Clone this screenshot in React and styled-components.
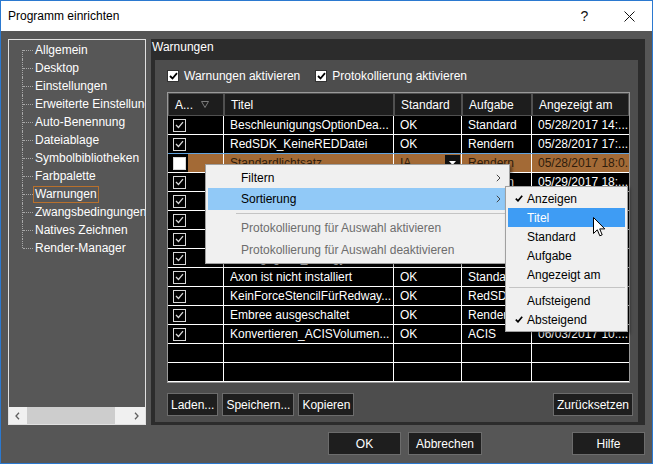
import React from "react";
import styled, { createGlobalStyle } from "styled-components";

const GlobalStyle = createGlobalStyle`
  html, body {
    margin: 0;
    padding: 0;
    background: #ffffff;
  }
  body {
    font-family: "Liberation Sans", Arial, sans-serif;
    font-size: 12px;
  }
`;

const Window = styled.div`
  position: relative;
  width: 653px;
  height: 464px;
  box-sizing: border-box;
  border: 1px solid #2b79d0;
  display: flex;
  flex-direction: column;
  background: #565656;
  overflow: hidden;
`;

const TitleBar = styled.div`
  height: 30px;
  flex-shrink: 0;
  background: #ffffff;
  color: #000000;
  display: flex;
  align-items: center;
  padding-left: 7px;
`;

const TitleText = styled.div`
  flex: 1;
`;

const TitleButton = styled.div`
  width: 45px;
  height: 30px;
  display: flex;
  align-items: center;
  justify-content: center;
  font-size: 14px;
  color: #111;
`;

const Body = styled.div`
  flex: 1;
  display: flex;
  flex-direction: column;
  padding: 8px 7px 8px 7px;
`;

const Main = styled.div`
  height: 386px;
  display: flex;
  gap: 5px;
`;

const Tree = styled.div`
  width: 138px;
  box-sizing: border-box;
  border: 1px solid #e0e0e0;
  background: #575757;
  display: flex;
  flex-direction: column;
`;

const TreeList = styled.div`
  flex: 1;
  padding: 1px 0 0 13px;
  overflow: hidden;
`;

const TreeItem = styled.div`
  height: 18px;
  display: flex;
  align-items: center;
  white-space: nowrap;
  color: #ffffff;
`;

const Connector = styled.span`
  position: relative;
  width: 11px;
  height: 18px;
  flex-shrink: 0;
  &::before {
    content: "";
    position: absolute;
    left: 0;
    top: ${(p) => (p.$first ? "9px" : "0")};
    bottom: ${(p) => (p.$last ? "9px" : "0")};
    border-left: 1px dotted #a8a8a8;
  }
  &::after {
    content: "";
    position: absolute;
    left: 1px;
    right: 0;
    top: 9px;
    border-top: 1px dotted #a8a8a8;
  }
`;

const TreeLabel = styled.span`
  height: 15px;
  line-height: 15px;
  padding: 0 1px;
  border: 1px solid ${(p) => (p.$active ? "#b8702c" : "transparent")};
`;

const HScroll = styled.div`
  height: 17px;
  background: #f0f0f0;
  display: flex;
  align-items: center;
  color: #606060;
`;

const ScrollArrow = styled.div`
  width: 17px;
  height: 17px;
  display: flex;
  align-items: center;
  justify-content: center;
`;

const ScrollTrack = styled.div`
  flex: 1;
  height: 17px;
  display: flex;
  align-items: center;
`;

const ScrollThumb = styled.div`
  width: 88px;
  height: 17px;
  margin-left: 1px;
  background: #cdcdcd;
`;

const Group = styled.div`
  flex: 1;
  background: #2c2c2c;
  display: flex;
  flex-direction: column;
  padding: 0 7px 3px 4px;
`;

const GroupTitle = styled.div`
  height: 21px;
  line-height: 17px;
  color: #ffffff;
  margin-left: -3px;
`;

const Panel = styled.div`
  flex: 1;
  background: #4d4d4d;
  padding: 9px 8px 6px 12px;
  display: flex;
  flex-direction: column;
`;

const CheckRow = styled.div`
  height: 14px;
  display: flex;
  align-items: center;
  color: #ffffff;
`;

const CheckLabel = styled.label`
  display: flex;
  align-items: center;
  gap: 5px;
  margin-right: ${(p) => p.$mr || 0}px;
`;

const Box = styled.span`
  width: ${(p) => (p.$dark ? 13 : 12)}px;
  height: ${(p) => (p.$dark ? 13 : 12)}px;
  box-sizing: border-box;
  border: 1px solid ${(p) => (p.$dark ? "#d8d8d8" : "#333")};
  background: ${(p) => (p.$dark ? (p.$empty ? "#ffffff" : "#000000") : "#ffffff")};
  display: flex;
  align-items: center;
  justify-content: center;
`;

const Table = styled.div`
  margin-top: 9px;
  border: 1px solid #9a9a9a;
  background: #000000;
  display: flex;
  flex-direction: column;
`;

const cols = "56px 170px 68px 70px 97px";

const HeaderRow = styled.div`
  display: grid;
  grid-template-columns: ${cols};
  height: 23px;
  background: #2a2a2a;
`;

const HeaderCell = styled.div`
  box-sizing: border-box;
  border: 1px solid #505050;
  background: #1d1d1d;
  color: #ffffff;
  display: flex;
  align-items: center;
  padding-left: 6px;
  gap: 8px;
  white-space: nowrap;
  overflow: hidden;
`;

const Row = styled.div`
  display: grid;
  grid-template-columns: ${cols};
  height: 19px;
  box-sizing: border-box;
  border-bottom: 1px solid #ffffff;
  box-shadow: ${(p) => (p.$selected ? "0 -1px 0 #62a3de" : "none")};
`;

const Cell = styled.div`
  box-sizing: border-box;
  border-right: ${(p) => (p.$last ? "none" : "1px solid #ffffff")};
  display: flex;
  align-items: center;
  padding-left: ${(p) => (p.$check ? 5 : 6)}px;
  white-space: nowrap;
  overflow: hidden;
  color: ${(p) => (p.$selected ? "#2e1c0c" : "#ffffff")};
  background: ${(p) =>
    p.$selected
      ? p.$check
        ? "linear-gradient(to right, #000 20px, #a36a36 20px)"
        : "#a36a36"
      : "#000000"};
`;

const CellText = styled.span`
  flex: 1;
  overflow: hidden;
`;

const DropButton = styled.span`
  width: 15px;
  height: 17px;
  margin-right: 1px;
  background: #111;
  display: flex;
  align-items: center;
  justify-content: center;
`;

const ButtonRow = styled.div`
  margin-top: 10px;
  display: flex;
  gap: 4px;
  margin-right: -3px;
`;

const Spacer = styled.div`
  flex: 1;
`;

const Button = styled.button`
  height: 23px;
  box-sizing: border-box;
  width: ${(p) => (p.$w ? `${p.$w}px` : "auto")};
  padding: 0 3px;
  border: 1px solid #6c6c6c;
  background: #1e1e1e;
  color: #ffffff;
  font-family: inherit;
  font-size: 12px;
  margin-left: ${(p) => p.$ml || 0}px;
`;

const Footer = styled.div`
  margin-top: 7px;
  display: flex;
  padding-left: 320px;
`;

const Menu = styled.div`
  position: absolute;
  left: ${(p) => p.$x}px;
  top: ${(p) => p.$y}px;
  width: ${(p) => p.$w}px;
  box-sizing: border-box;
  border: 1px solid #a0a0a0;
  background: #f0f0f0;
  padding: 2px;
  box-shadow: 2px 2px 3px rgba(0, 0, 0, 0.45);
  color: #000000;
`;

const MenuItem = styled.div`
  height: ${(p) => p.$h}px;
  display: flex;
  align-items: center;
  padding-left: ${(p) => p.$pl}px;
  position: relative;
  background: ${(p) => p.$bg || "transparent"};
  color: ${(p) => (p.$disabled ? "#6d6d6d" : p.$light ? "#ffffff" : "#000000")};
  white-space: nowrap;
`;

const MenuCheck = styled.span`
  position: absolute;
  left: 7px;
  top: 0;
  height: 100%;
  display: flex;
  align-items: center;
`;

const Chevron = styled.span`
  position: absolute;
  right: 6px;
  top: 0;
  height: 100%;
  display: flex;
  align-items: center;
`;

const Separator = styled.div`
  height: 7px;
  display: flex;
  align-items: center;
  padding-left: ${(p) => p.$pl}px;
  &::after {
    content: "";
    flex: 1;
    border-top: 1px solid #c4c4c4;
  }
`;

const Cursor = styled.svg`
  position: absolute;
  left: 592px;
  top: 216px;
`;

const treeItems = [
  "Allgemein",
  "Desktop",
  "Einstellungen",
  "Erweiterte Einstellungen",
  "Auto-Benennung",
  "Dateiablage",
  "Symbolbibliotheken",
  "Farbpalette",
  "Warnungen",
  "Zwangsbedingungen",
  "Natives Zeichnen",
  "Render-Manager",
];

const rows = [
  { on: true, title: "BeschleunigungsOptionDea...", std: "OK", task: "Standard", date: "05/28/2017 14:..." },
  { on: true, title: "RedSDK_KeineREDDatei", std: "OK", task: "Rendern", date: "05/28/2017 17:..." },
  { on: false, title: "Standardlichtsatz", std: "IA", task: "Rendern", date: "05/28/2017 18:0...", selected: true },
  { on: true, title: "RedSDK_Materialfehler", std: "OK", task: "Rendern", date: "05/29/2017 18:..." },
  { on: true, title: "Grafiktreiber_Veraltet", std: "OK", task: "Standard", date: "05/30/2017 08:..." },
  { on: true, title: "Lizenz_Ablauf", std: "OK", task: "Standard", date: "05/30/2017 11:..." },
  { on: true, title: "Netzwerkpfad_Ungültig", std: "OK", task: "Standard", date: "05/31/2017 09:..." },
  { on: true, title: "Anzeigegerät_Energy...", std: "OK", task: "Standard", date: "06/01/2017 15:..." },
  { on: true, title: "Axon ist nicht installiert", std: "OK", task: "Standard", date: "06/02/2017 09:..." },
  { on: true, title: "KeinForceStencilFürRedway...", std: "OK", task: "RedSDK", date: "06/02/2017 13:..." },
  { on: true, title: "Embree ausgeschaltet", std: "OK", task: "Rendern", date: "06/03/2017 08:..." },
  { on: true, title: "Konvertieren_ACISVolumen...", std: "OK", task: "ACIS", date: "06/03/2017 10:..." },
  null,
  null,
];

const Tick = ({ color = "#d8d8d8", w = 1.3 }) => (
  <svg width="9" height="8" viewBox="0 0 9 8">
    <path d="M1 4 L3.5 6.5 L8 1.2" fill="none" stroke={color} strokeWidth={w} />
  </svg>
);

const MenuTick = () => (
  <svg width="8" height="7" viewBox="0 0 8 7">
    <path d="M0.8 3.6 L3 5.8 L7.2 0.8" fill="none" stroke="#000" strokeWidth="1.7" />
  </svg>
);

const ChevronIcon = () => (
  <svg width="5" height="8" viewBox="0 0 5 8">
    <path d="M0.8 0.8 L4 4 L0.8 7.2" fill="none" stroke="#444" strokeWidth="1" />
  </svg>
);

export default function App() {
  return (
    <>
      <GlobalStyle />
      <Window>
        <TitleBar>
          <TitleText>Programm einrichten</TitleText>
          <TitleButton>?</TitleButton>
          <TitleButton>
            <svg width="11" height="11" viewBox="0 0 11 11">
              <path d="M0.5 0.5 L10.5 10.5 M10.5 0.5 L0.5 10.5" stroke="#111" strokeWidth="1" />
            </svg>
          </TitleButton>
        </TitleBar>

        <Body>
          <Main>
            <Tree>
              <TreeList>
                {treeItems.map((t, i) => (
                  <TreeItem key={t}>
                    <Connector $first={i === 0} $last={i === treeItems.length - 1} />
                    <TreeLabel $active={t === "Warnungen"}>{t}</TreeLabel>
                  </TreeItem>
                ))}
              </TreeList>
              <HScroll>
                <ScrollArrow>
                  <svg width="5" height="8" viewBox="0 0 5 8">
                    <path d="M4 0.8 L1 4 L4 7.2" fill="none" stroke="#606060" strokeWidth="1.3" />
                  </svg>
                </ScrollArrow>
                <ScrollTrack>
                  <ScrollThumb />
                </ScrollTrack>
                <ScrollArrow>
                  <svg width="5" height="8" viewBox="0 0 5 8">
                    <path d="M1 0.8 L4 4 L1 7.2" fill="none" stroke="#606060" strokeWidth="1.3" />
                  </svg>
                </ScrollArrow>
              </HScroll>
            </Tree>

            <Group>
              <GroupTitle>Warnungen</GroupTitle>
              <Panel>
                <CheckRow>
                  <CheckLabel $mr={15}>
                    <Box>
                      <Tick color="#000" w={1.8} />
                    </Box>
                    Warnungen aktivieren
                  </CheckLabel>
                  <CheckLabel>
                    <Box>
                      <Tick color="#000" w={1.8} />
                    </Box>
                    Protokollierung aktivieren
                  </CheckLabel>
                </CheckRow>

                <Table>
                  <HeaderRow>
                    <HeaderCell>
                      A...
                      <svg width="8" height="7" viewBox="0 0 8 7">
                        <path d="M0.5 0.5 L7.5 0.5 L4 6.5 Z" fill="none" stroke="#7c7c7c" strokeWidth="1" />
                      </svg>
                    </HeaderCell>
                    <HeaderCell>Titel</HeaderCell>
                    <HeaderCell>Standard</HeaderCell>
                    <HeaderCell>Aufgabe</HeaderCell>
                    <HeaderCell>Angezeigt am</HeaderCell>
                  </HeaderRow>
                  {rows.map((r, i) =>
                    r ? (
                      <Row key={i} $selected={r.selected}>
                        <Cell $check $selected={r.selected}>
                          <Box $dark $empty={!r.on}>
                            {r.on && <Tick />}
                          </Box>
                        </Cell>
                        <Cell $selected={r.selected}>
                          <CellText>{r.title}</CellText>
                        </Cell>
                        <Cell $selected={r.selected}>
                          <CellText>{r.std}</CellText>
                          {r.selected && (
                            <DropButton>
                              <svg width="7" height="4" viewBox="0 0 7 4">
                                <path d="M0 0 L7 0 L3.5 4 Z" fill="#fff" />
                              </svg>
                            </DropButton>
                          )}
                        </Cell>
                        <Cell $selected={r.selected}>
                          <CellText>{r.task}</CellText>
                        </Cell>
                        <Cell $last $selected={r.selected}>
                          <CellText>{r.date}</CellText>
                        </Cell>
                      </Row>
                    ) : (
                      <Row key={i}>
                        <Cell />
                        <Cell />
                        <Cell />
                        <Cell />
                        <Cell $last />
                      </Row>
                    )
                  )}
                </Table>

                <ButtonRow>
                  <Button>Laden...</Button>
                  <Button>Speichern...</Button>
                  <Button>Kopieren</Button>
                  <Spacer />
                  <Button>Zurücksetzen</Button>
                </ButtonRow>
              </Panel>
            </Group>
          </Main>

          <Footer>
            <Button $w={73}>OK</Button>
            <Button $w={74} $ml={7}>Abbrechen</Button>
            <Spacer />
            <Button $w={73}>Hilfe</Button>
          </Footer>
        </Body>

        <Menu $x={204} $y={163} $w={305}>
          <MenuItem $h={21} $pl={33}>
            Filtern
            <Chevron><ChevronIcon /></Chevron>
          </MenuItem>
          <MenuItem $h={22} $pl={33} $bg="#91c9f7">
            Sortierung
            <Chevron><ChevronIcon /></Chevron>
          </MenuItem>
          <Separator $pl={28} />
          <MenuItem $h={22} $pl={33} $disabled>
            Protokollierung für Auswahl aktivieren
          </MenuItem>
          <MenuItem $h={22} $pl={33} $disabled>
            Protokollierung für Auswahl deaktivieren
          </MenuItem>
        </Menu>

        <Menu $x={504} $y={185} $w={123}>
          <MenuItem $h={19} $pl={19}>
            <MenuCheck><MenuTick /></MenuCheck>
            Anzeigen
          </MenuItem>
          <MenuItem $h={19} $pl={19} $bg="#3e9cf4" $light>
            Titel
          </MenuItem>
          <MenuItem $h={19} $pl={19}>Standard</MenuItem>
          <MenuItem $h={19} $pl={19}>Aufgabe</MenuItem>
          <MenuItem $h={19} $pl={19}>Angezeigt am</MenuItem>
          <Separator $pl={1} />
          <MenuItem $h={19} $pl={19}>Aufsteigend</MenuItem>
          <MenuItem $h={19} $pl={19}>
            <MenuCheck><MenuTick /></MenuCheck>
            Absteigend
          </MenuItem>
        </Menu>

        <Cursor width="13" height="21" viewBox="0 0 13 21">
          <path
            d="M0.5 0.5 L0.5 16.5 L4.3 12.8 L6.8 18.8 L9.2 17.8 L6.7 11.9 L11.8 11.9 Z"
            fill="#ffffff"
            stroke="#000000"
            strokeWidth="1"
            strokeLinejoin="miter"
          />
        </Cursor>
      </Window>
    </>
  );
}
